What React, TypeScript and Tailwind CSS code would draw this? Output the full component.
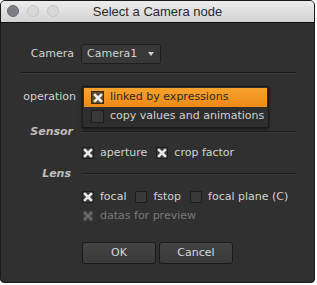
import React from "react";

const font = { fontFamily: '"DejaVu Sans", Verdana, sans-serif' };

function Check({ checked, disabled }: { checked?: boolean; disabled?: boolean }) {
  return (
    <span
      className={
        "inline-flex h-[12px] w-[12px] shrink-0 items-center justify-center rounded-[1px] border " +
        (disabled ? "border-[#333] bg-[#3a3a3a]" : "border-[#1c1c1c] bg-[#393939]")
      }
    >
      {checked && (
        <svg width="10" height="10" viewBox="0 0 10 10">
          <path
            d="M2 2 L8 8 M8 2 L2 8"
            stroke={disabled ? "#6a6a6a" : "#e6e6e6"}
            strokeWidth="2.6"
            strokeLinecap="square"
          />
        </svg>
      )}
    </span>
  );
}

function Opt({ label, checked, disabled }: { label: string; checked?: boolean; disabled?: boolean }) {
  return (
    <span className="flex items-center gap-[6px]">
      <Check checked={checked} disabled={disabled} />
      <span className={disabled ? "text-[#787878]" : "text-[#d2d2d2]"}>{label}</span>
    </span>
  );
}

export default function App() {
  return (
    <div className="h-[285px] w-[317px] bg-white" style={font}>
      <div className="flex h-[283px] w-[315px] flex-col overflow-hidden rounded-t-[5px] rounded-b-[4px] border border-[#1a1a1a] bg-[#303030] text-[11px] text-[#d2d2d2]">
        {/* title bar */}
        <div className="relative flex h-[22px] shrink-0 items-center justify-center border-b border-[#111] bg-gradient-to-b from-[#ececec] to-[#d3d3d3]">
          <div className="absolute left-[6px] top-[4px] flex gap-[8px]">
            <span className="h-[12px] w-[12px] rounded-full border border-[#6a6a70] bg-[#7d7d83]" />
            <span className="h-[12px] w-[12px] rounded-full border border-[#c4c4c4] bg-[#d9d9d9]" />
            <span className="h-[12px] w-[12px] rounded-full border border-[#c4c4c4] bg-[#d9d9d9]" />
          </div>
          <span
            className="text-[13px] text-[#2a2a2a]"
            style={{ fontFamily: '"Liberation Sans", Arial, sans-serif' }}
          >
            Select a Camera node
          </span>
        </div>

        {/* Camera row */}
        <div className="mt-[21px] flex h-[20px] items-center">
          <span className="w-[74px] pr-[1px] text-right">Camera</span>
          <div className="ml-[6px] flex h-[20px] w-[80px] items-center justify-between rounded-[3px] border border-[#1e1e1e] bg-[#383838] pl-[5px] pr-[6px]">
            <span>Camera1</span>
            <svg width="6" height="4" viewBox="0 0 6 4">
              <path d="M0 0 L6 0 L3 4 Z" fill="#cfcfcf" />
            </svg>
          </div>
        </div>

        {/* separator */}
        <div className="ml-[20px] mt-[8px] h-[2px] w-[275px] border-t border-[#1c1c1c] border-b border-b-[#3a3a3a]" />

        {/* operation row */}
        <div className="relative mt-[13px] flex h-[20px] items-center">
          <span className="w-[75px] text-right">operation</span>
          <div className="absolute left-[81px] top-[-1px] z-10 w-[187px] border border-[#1a1a1a] bg-[#2e2e2e] p-[1px] shadow-[0_1px_3px_rgba(0,0,0,0.6)]">
            <div className="flex h-[19px] items-center gap-[6px] bg-gradient-to-b from-[#f7a22c] to-[#ee8a16] pl-[7px] text-[#2a2a2a]">
              <span className="inline-flex h-[13px] w-[13px] items-center justify-center border border-[#3a2a10] bg-[#5a4a35]">
                <svg width="10" height="10" viewBox="0 0 10 10">
                  <path d="M2 2 L8 8 M8 2 L2 8" stroke="#eeeeee" strokeWidth="2.6" strokeLinecap="square" />
                </svg>
              </span>
              <span>linked by expressions</span>
            </div>
            <div className="flex h-[19px] items-center gap-[6px] pl-[7px]">
              <span className="h-[13px] w-[13px] border border-[#1c1c1c] bg-[#393939]" />
              <span>copy values and animations</span>
            </div>
          </div>
        </div>

        {/* Sensor */}
        <div className="mt-[18px] flex h-[14px] items-center">
          <span className="w-[72px] text-right font-bold italic text-[#bdbdbd]">Sensor</span>
          <div className="ml-[9px] h-[2px] w-[215px] border-t border-[#1c1c1c] border-b border-b-[#3a3a3a]" />
        </div>

        <div className="mt-[6px] flex h-[16px] items-center gap-[9px] pl-[81px]">
          <Opt label="aperture" checked />
          <Opt label="crop factor" checked />
        </div>

        {/* Lens */}
        <div className="mt-[6px] flex h-[14px] items-center">
          <span className="w-[70px] text-right font-bold italic text-[#bdbdbd]">Lens</span>
          <div className="ml-[11px] h-[2px] w-[215px] border-t border-[#1c1c1c] border-b border-b-[#3a3a3a]" />
        </div>

        <div className="mt-[8px] flex h-[16px] items-center gap-[9px] pl-[81px]">
          <Opt label="focal" checked />
          <Opt label="fstop" />
          <Opt label="focal plane (C)" />
        </div>

        <div className="mt-[3px] flex h-[16px] items-center pl-[81px]">
          <Opt label="datas for preview" checked disabled />
        </div>

        {/* buttons */}
        <div className="mt-[18px] flex gap-[3px] pl-[81px]">
          <button className="h-[22px] w-[74px] rounded-[3px] border border-[#1a1a1a] bg-gradient-to-b from-[#434343] to-[#3a3a3a] text-[#d8d8d8]">
            OK
          </button>
          <button className="h-[22px] w-[74px] rounded-[3px] border border-[#1a1a1a] bg-gradient-to-b from-[#434343] to-[#3a3a3a] text-[#d8d8d8]">
            Cancel
          </button>
        </div>
      </div>
    </div>
  );
}
